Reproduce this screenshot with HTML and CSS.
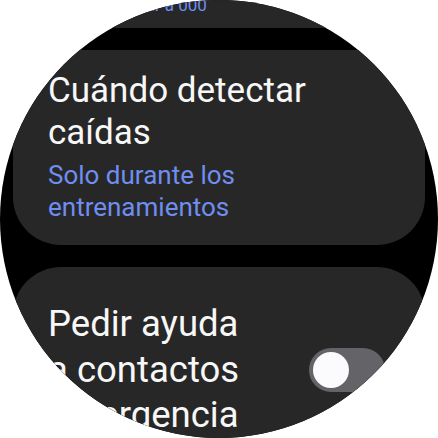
FILE: index.html
```html
<!DOCTYPE html>
<html lang="es">
<head>
<meta charset="utf-8">
<title>Detección de caídas</title>
<link rel="stylesheet" href="styles.css">
</head>
<body>
<div class="screen">
  <div class="list">
    <div class="card card-small">
      <div class="sub sub-small">Llamar a 000</div>
    </div>
    <div class="card card-detect">
      <div class="title">Cuándo detectar caídas</div>
      <div class="sub">Solo durante los entrenamientos</div>
    </div>
    <div class="card card-toggle">
      <div class="title title-large">Pedir ayuda a contactos emergencia</div>
      <div class="switch"><span class="thumb"></span></div>
    </div>
  </div>
</div>
</body>
</html>
```
FILE: styles.css
```css
html, body {
  margin: 0;
  padding: 0;
  background: #ffffff;
}
body {
  font-family: Roboto, "Noto Sans", sans-serif;
}
.screen {
  width: 438px;
  height: 438px;
  border-radius: 50%;
  overflow: hidden;
  background: #000000;
}
.list {
  display: flex;
  flex-direction: column;
  gap: 22px;
  padding: 0 13px;
  margin-top: -26px;
}
.card {
  background: #272727;
  border-radius: 48px;
}
.card-small {
  margin: 0 72px;
  border-radius: 31px;
  padding: 20px 22px 12px 23px;
}
.card-detect {
  padding: 20px 35px 22px 35px;
}
.title {
  color: #f7f7f7;
  font-size: 35px;
  line-height: 42px;
}
.sub {
  color: #6f8ef0;
  font-size: 26px;
  line-height: 32.4px;
  margin-top: 4.5px;
}
.sub.sub-small {
  font-size: 17px;
  line-height: 22px;
  margin-top: 0;
}
.card-toggle {
  display: grid;
  grid-template-columns: 1fr auto;
  column-gap: 46px;
  align-items: center;
  padding: 34px 40px 40px 35px;
}
.title-large {
  font-size: 36.5px;
  line-height: 45.5px;
}
.switch {
  width: 76px;
  height: 44px;
  border-radius: 22px;
  background: #646468;
  display: flex;
  align-items: center;
  padding: 0 4px;
  box-sizing: border-box;
}
.thumb {
  width: 36px;
  height: 36px;
  border-radius: 50%;
  background: #fbfbfe;
}
```
